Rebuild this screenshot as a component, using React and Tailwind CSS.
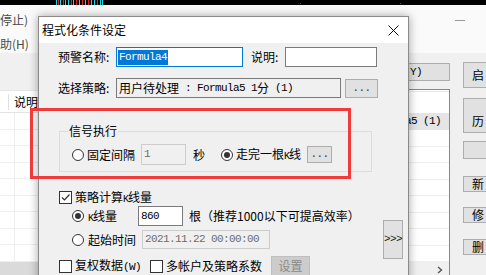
import React from "react";

const cjk = "font-['Noto_Sans_CJK_SC',sans-serif]";
const mono = "font-['Liberation_Mono',monospace] text-[11px] tracking-[-0.6px]";

const Radio = ({ checked }) => (
  <span className="w-[12px] h-[12px] shrink-0 rounded-full border border-[#333333] bg-white flex items-center justify-center">
    {checked && <span className="w-[6px] h-[6px] rounded-full bg-[#333333]" />}
  </span>
);

const Check = ({ checked }) => (
  <span className="w-[13px] h-[13px] shrink-0 border border-[#333333] bg-white flex items-center justify-center">
    {checked && (
      <svg width="11" height="11" viewBox="0 0 11 11">
        <path d="M2 5.5 L4.5 8 L9.5 2.5" stroke="#333" strokeWidth="1.2" fill="none" />
      </svg>
    )}
  </span>
);

const K = () => <span className="font-['Liberation_Mono',monospace] text-[10px] tracking-[-1px]">K</span>;

const chartLines = [
  [56, "#19d8e0"], [58, "#e02020"], [60, "#19d8e0"], [63, "#e02020"], [65, "#19d8e0"],
  [68, "#19d8e0"], [71, "#e02020"], [73, "#19d8e0"], [76, "#e02020"], [79, "#19d8e0"],
  [82, "#e02020"], [85, "#19d8e0"], [88, "#e02020"], [91, "#19d8e0"], [94, "#19d8e0"],
  [97, "#e02020"], [100, "#19d8e0"], [102, "#19d8e0"],
];

const gridRows = [0, 1, 2, 3, 4, 5, 6, 7, 8];

export default function App() {
  return (
    <div className={`relative w-[486px] h-[275px] overflow-hidden bg-[#f0f0f0] text-[12px] text-black ${cjk}`}>
      {/* background app */}
      <div className="flex flex-col h-full">
        <svg width="486" height="5" className="block bg-black shrink-0">
          {chartLines.map(([x, c]) => (
            <line key={x} x1={x + 0.5} y1="0" x2={x + 0.5} y2="5" stroke={c} strokeWidth="1" />
          ))}
          <rect x="300" y="3" width="1" height="1" fill="#c02020" />
          <rect x="400" y="3" width="1" height="1" fill="#c02020" />
        </svg>
        <div className="h-[48px] shrink-0 bg-[#fafafa] flex">
          <div className="flex flex-col text-[#4a4a4a] leading-[16px] pt-[7px] gap-[8px]">
            <span>停止)</span>
            <span>助(H)</span>
          </div>
          <div className="ml-auto mr-[21px] mt-[15px] w-[10px] h-px bg-[#999999]" />
        </div>
        <div className="flex flex-1">
          <div className="w-[38px] shrink-0 flex flex-col">
            <div className="h-[37px]" />
            <div className="h-[22px] bg-white border-t border-[#e5e5e5] flex items-center">
              <span className="w-[15px] h-[16px] border-r border-[#e0e0e0]" />
              <span className="pl-[5px] whitespace-nowrap">说明</span>
            </div>
            <div className="flex-1 bg-white border-t border-[#e3e3e3] relative flex flex-col">
              {gridRows.map((r) => (
                <div key={r} className="h-[16.5px] border-b border-[#efefef] flex shrink-0">
                  <span className="w-[15px] border-r border-[#efefef]" />
                </div>
              ))}
              <div className="mt-auto h-[19px] bg-[#dadada]" />
            </div>
          </div>
          <div className="flex-1" />
          <div className="w-[50px] shrink-0 flex flex-col">
            <div className="mt-[10px] h-[18px] border border-[#adadad] bg-[#e1e1e1] flex items-center pl-[3px]">
              <span className={mono}>(Y)</span>
            </div>
            <div className="mt-[8px] flex-1 bg-white border border-[#828790] flex flex-col">
              <div className="h-[2px] border-b border-[#e8e8e8]" />
              <div className="h-[21px]" />
              <div className="h-[17px] bg-[#e5e5e5] flex items-center pl-[4px] whitespace-nowrap">
                <span className={mono}>a5 (1)</span>
              </div>
              {[0, 1, 2, 3, 4, 5, 6].map((r) => (
                <div key={r} className="h-[16.5px] border-b border-[#eeeeee] shrink-0" />
              ))}
              <div className="mt-auto h-[19px] bg-[#f0f0f0] flex items-center justify-end pr-[6px]">
                <svg width="6" height="8" viewBox="0 0 6 8">
                  <path d="M1 1 L4.5 4 L1 7" stroke="#555" strokeWidth="1.4" fill="none" />
                </svg>
              </div>
            </div>
          </div>
          <div className="w-[13px] shrink-0" />
          <div className="w-[23px] shrink-0 flex flex-col">
            <div className="mt-[9px] h-[26px] w-[60px] border border-[#adadad] bg-[#e1e1e1] flex items-center pl-[8px]">启</div>
            <div className="mt-[10px] h-[35px] w-[60px] border border-[#adadad] bg-[#e1e1e1] flex items-end pb-[2px] pl-[8px]">历</div>
            <div className="mt-[8px] h-[18px] w-[60px] border border-[#adadad] bg-[#e1e1e1]" />
            <div className="mt-[17px] h-[16px] w-[60px] border border-[#adadad] bg-[#e1e1e1] flex items-center pl-[8px]">新</div>
            <div className="mt-[15px] h-[16px] w-[60px] border border-[#adadad] bg-[#e1e1e1] flex items-center pl-[8px]">修</div>
            <div className="mt-[16px] h-[16px] w-[60px] border border-[#adadad] bg-[#e1e1e1] flex items-center pl-[8px]">删</div>
          </div>
        </div>
      </div>

      {/* dialog window */}
      <div className="absolute left-[38px] top-[16px] w-[371px] h-[275px] border border-[#8a8a8a] bg-[#f0f0f0] shadow-[0_0_9px_rgba(0,0,0,0.35)] flex flex-col">
        <div className="h-[26px] shrink-0 bg-white flex items-center justify-between pl-[3px] pr-[9px]">
          <span>程式化条件设定</span>
          <svg width="11" height="11" viewBox="0 0 11 11">
            <path d="M0.5 0.5 L10.5 10.5 M10.5 0.5 L0.5 10.5" stroke="#111" strokeWidth="1" />
          </svg>
        </div>

        <div className="flex flex-col">
          <div className="mt-[4px] pl-[19px] flex items-center h-[20px]">
            <span className="w-[58px]">预警名称:</span>
            <div className="w-[127px] h-[20px] border border-[#0078d7] bg-white flex items-center pl-[1px]">
              <span className={`${mono} bg-[#0078d7] text-white leading-[15px] px-px`}>Formula4</span>
            </div>
            <span className="ml-[8px] w-[34px]">说明:</span>
            <div className="w-[92px] h-[20px] border border-[#7a7a7a] bg-white" />
          </div>

          <div className="mt-[11px] pl-[19px] flex items-center h-[20px]">
            <span className="w-[58px]">选择策略:</span>
            <div className="w-[225px] h-[20px] border border-[#7a7a7a] bg-[#f0f0f0] flex items-center pl-[2px] whitespace-nowrap">
              <span>用户待处理</span>
              <span className={mono}>&nbsp;: Formula5 1</span>
              <span>分</span>
              <span className={mono}>&nbsp;(1)</span>
            </div>
            <div className="ml-[4px] w-[33px] h-[19px] border border-[#adadad] bg-[#e1e1e1] flex items-center justify-center">
              <span className={`${mono} text-[#333]`}>...</span>
            </div>
          </div>

          <div className="mt-[33px] ml-[20px] w-[313px] h-[41px] border border-[#dcdcdc] relative">
            <span className="absolute left-[8px] -top-[9px] px-[1px] bg-[#f0f0f0] leading-[16px]">信号执行</span>
            <div className="mt-[12px] pl-[12px] flex items-center h-[21px]">
              <Radio />
              <span className="ml-[3px]">固定间隔</span>
              <div className="ml-[6px] w-[45px] h-[21px] border border-[#cccccc] bg-[#f0f0f0] flex items-center pl-[2px]">
                <span className={`${mono} text-[#6d6d6d]`}>1</span>
              </div>
              <span className="ml-[7px]">秒</span>
              <span className="ml-[16px]"><Radio checked /></span>
              <span className="ml-[3px] whitespace-nowrap">走完一根<K />线</span>
              <div className="ml-[6px] w-[25px] h-[17px] border border-[#adadad] bg-[#e1e1e1] flex items-center justify-center">
                <span className={`${mono} text-[#333]`}>...</span>
              </div>
            </div>
          </div>

          <div className="mt-[18px] pl-[20px] flex items-center h-[14px]">
            <Check checked />
            <span className="ml-[3px] whitespace-nowrap">策略计算<K />线量</span>
          </div>

          <div className="flex mt-[2px]">
            <div className="flex flex-col">
              <div className="pl-[33px] flex items-center h-[20px]">
                <Radio checked />
                <span className="ml-[4px] w-[50px] whitespace-nowrap"><K />线量</span>
                <div className="w-[45px] h-[20px] border border-[#7a7a7a] bg-white flex items-center pl-[2px]">
                  <span className={mono}>860</span>
                </div>
                <span className="ml-[6px] whitespace-nowrap">根（推荐1000以下可提高效率）</span>
              </div>
              <div className="mt-[4px] pl-[33px] flex items-center h-[19px]">
                <Radio />
                <span className="ml-[4px] w-[54px]">起始时间</span>
                <div className="w-[128px] h-[19px] border border-[#cccccc] bg-[#f0f0f0] flex items-center pl-[2px]">
                  <span className={`${mono} text-[#6d6d6d]`}>2021.11.22 00:00:00</span>
                </div>
              </div>
              <div className="mt-[7px] pl-[20px] flex items-center h-[20px]">
                <Check />
                <span className="ml-[3px] whitespace-nowrap">复权数据<span className={mono}>(W)</span></span>
                <span className="ml-[9px]"><Check /></span>
                <span className="ml-[3px] whitespace-nowrap">多帐户及策略系数</span>
                <div className="ml-[9px] w-[39px] h-[20px] border border-[#bfbfbf] bg-[#cccccc] flex items-center justify-center text-[#8a8a8a]">设置</div>
              </div>
            </div>
            <div className="ml-auto mr-[5px] mt-[14px] w-[20px] h-[39px] border border-[#adadad] bg-[#e1e1e1] flex items-center justify-center">
              <span className={`${mono} text-[#222]`}>&gt;&gt;&gt;</span>
            </div>
          </div>
        </div>
      </div>

      {/* red annotation frame */}
      <div className="absolute left-[30px] top-[108px] w-[321px] h-[71px] border-[3px] border-[#ef3b3b]" />
    </div>
  );
}
